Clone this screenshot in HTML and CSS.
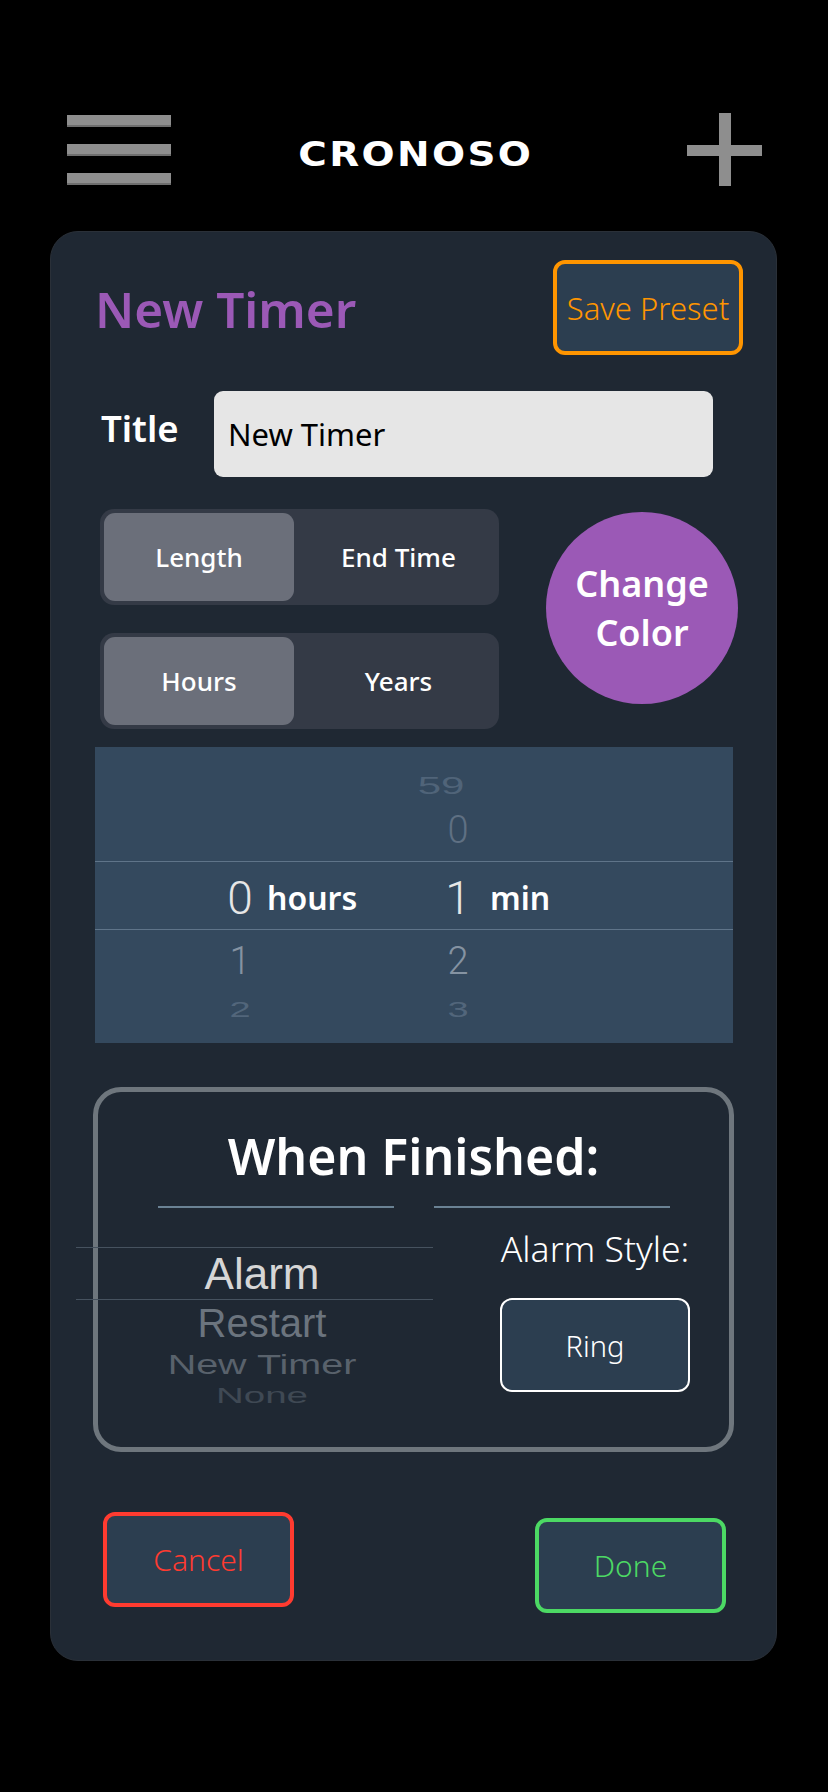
FILE: index.html
```html
<!DOCTYPE html>
<html lang="en">
<head>
<meta charset="utf-8">
<title>Cronoso - New Timer</title>
<link rel="stylesheet" href="styles.css">
</head>
<body>
<header class="topbar">
  <div class="menu"><span></span><span></span><span></span></div>
  <div class="logo">CRONOSO</div>
  <div class="add">
    <svg width="75" height="73" viewBox="0 0 75 73"><rect x="32" y="0" width="12" height="73" fill="#8e8e8e"/><rect x="0" y="32" width="75" height="11" fill="#8e8e8e"/></svg>
  </div>
</header>
<main class="card">
  <div class="head">
    <h1 class="title">New Timer</h1>
    <button class="btn btn-orange">Save Preset</button>
  </div>
  <div class="row-title">
    <div class="label">Title</div>
    <div class="input">New Timer</div>
  </div>
  <div class="row-options">
    <div class="segments">
      <div class="seg"><span class="on">Length</span><span>End Time</span></div>
      <div class="seg"><span class="on">Hours</span><span>Years</span></div>
    </div>
    <div class="color">Change<br>Color</div>
  </div>
  <div class="wheel">
    <div class="wrow r-far"><span></span><span class="d"></span><span></span><span class="d squash far-top">59</span><span></span></div>
    <div class="wrow r-near r-up"><span></span><span class="d"></span><span></span><span class="d">0</span><span></span></div>
    <div class="wrow r-sel"><span></span><span class="d">0</span><span class="u">hours</span><span class="d">1</span><span class="u u2">min</span></div>
    <div class="wrow r-near r-down"><span></span><span class="d">1</span><span></span><span class="d">2</span><span></span></div>
    <div class="wrow r-far r-bottom"><span></span><span class="d squash">2</span><span></span><span class="d squash">3</span><span></span></div>
  </div>
  <section class="finish">
    <h2 class="finish-title">When Finished:</h2>
    <div class="rules"><i></i><i></i></div>
    <div class="fbody">
      <div class="awheel">
        <div class="aw-sel">Alarm</div>
        <div class="aw aw1">Restart</div>
        <div class="aw aw2"><span>New Timer</span></div>
        <div class="aw aw3"><span>None</span></div>
      </div>
      <div class="alarm-style">
        <div class="as-label">Alarm Style:</div>
        <button class="btn btn-white">Ring</button>
      </div>
    </div>
  </section>
  <div class="actions">
    <button class="btn btn-red">Cancel</button>
    <button class="btn btn-green">Done</button>
  </div>
</main>
</body>
</html>
```
FILE: styles.css
```css
body {
  margin: 0;
  background: #000;
  width: 828px;
  min-height: 1792px;
  font-family: "Noto Sans", "DejaVu Sans", sans-serif;
}

.topbar {
  display: grid;
  grid-template-columns: 1fr auto 1fr;
  align-items: center;
  height: 73px;
  margin-top: 113px;
  padding: 0 66px 0 67px;
}
.menu {
  width: 104px;
  height: 70px;
  display: flex;
  flex-direction: column;
  justify-content: space-between;
}
.menu span {
  height: 12px;
  background: #8e8e8e;
  box-shadow: inset 0 -2px 0 #6e6e6e;
}
.logo {
  color: #fff;
  font-family: "DejaVu Sans", sans-serif;
  font-weight: 700;
  font-size: 33px;
  letter-spacing: 2px;
  padding-left: 2px;
  line-height: 1;
  margin-top: 10px;
  transform: scaleX(1.18);
}
.add {
  justify-self: end;
  width: 75px;
  height: 73px;
}
.add svg { display: block; }

.card {
  box-sizing: border-box;
  width: 727px;
  height: 1430px;
  margin: 45px 0 0 50px;
  padding: 28px 33px 0 44px;
  background: #1f2833;
  border: 1px solid #2a3038;
  border-radius: 28px;
}

.head {
  display: flex;
  justify-content: space-between;
  align-items: center;
  height: 95px;
}
.title {
  margin: 4px 0 0 0;
  font-size: 49.5px;
  font-weight: 600;
  line-height: 1;
  color: #9b59b6;
}

.btn {
  box-sizing: border-box;
  width: 190px;
  height: 95px;
  padding: 0;
  background: #2c3e50;
  border-radius: 12px;
  font-family: "Noto Sans", sans-serif;
  font-size: 30px;
  font-weight: 300;
  display: flex;
  align-items: center;
  justify-content: center;
}
.btn-orange { border: 4px solid #ff9500; color: #ff9500; font-size: 31px; }
.btn-white { border: 2px solid #fff; color: #fff; height: 94px; font-size: 29px; margin-top: 30px; }
.btn-red { border: 4px solid #ff3b30; color: #ff3b30; width: 191px; }
.btn-green { border: 4px solid #4cd964; color: #4cd964; width: 191px; margin-top: 6px; }

.row-title {
  display: flex;
  align-items: center;
  margin-top: 36px;
}
.label {
  width: 113px;
  margin-left: 6px;
  margin-bottom: 12px;
  font-size: 36.5px;
  font-weight: 600;
  color: #fff;
}
.input {
  box-sizing: border-box;
  width: 499px;
  height: 86px;
  padding-left: 14px;
  background: #e6e6e6;
  border-radius: 9px;
  display: flex;
  align-items: center;
  font-size: 31px;
  color: #000;
}

.row-options {
  display: flex;
  align-items: flex-start;
  margin-top: 32px;
}
.segments {
  margin-left: 5px;
  width: 399px;
  display: flex;
  flex-direction: column;
  gap: 28px;
}
.seg {
  box-sizing: border-box;
  display: flex;
  height: 96px;
  padding: 4px;
  background: #343a46;
  border-radius: 14px;
}
.seg span {
  flex: 1;
  display: flex;
  align-items: center;
  justify-content: center;
  padding-left: 8px;
  color: #fff;
  font-size: 26px;
  font-weight: 500;
  border-radius: 11px;
}
.seg .on {
  flex: 0 0 190px;
  padding-left: 0;
  background: #6b6f7a;
}
.color {
  margin: 3px 5px 0 auto;
  width: 192px;
  height: 192px;
  border-radius: 50%;
  background: #9b59b6;
  display: flex;
  align-items: center;
  justify-content: center;
  text-align: center;
  color: #fff;
  font-size: 36px;
  font-weight: 600;
  line-height: 49px;
}

.wheel {
  box-sizing: border-box;
  margin-top: 18px;
  width: 638px;
  height: 296px;
  padding-top: 18px;
  background: #34495e;
  font-family: Roboto, "Liberation Sans", sans-serif;
  font-weight: 300;
}
.wrow {
  display: grid;
  grid-template-columns: 125px 40px 178px 40px 1fr;
  align-items: center;
}
.wrow .d {
  text-align: center;
  line-height: 1;
  white-space: nowrap;
}
.r-far { height: 32px; }
.r-far:first-child { height: 34px; }
.r-far .d { font-size: 38px; color: #52667b; font-weight: 400; font-family: "Liberation Sans", sans-serif; }
.squash { display: block; transform: scaleY(0.6); }
.r-far .far-top {
  font-size: 42px;
  transform: scaleY(0.56);
  margin: 0 -30px;
  padding-right: 34px;
  color: #506479;
}
.r-near { height: 62px; }
.r-near .d { font-size: 38px; }
.r-up .d { color: #5f7083; }
.r-down .d { color: #8593a2; }
.r-bottom { margin-top: -2px; }
.r-sel {
  box-sizing: border-box;
  height: 69px;
  padding-top: 4px;
  align-items: center;
  border-top: 1px solid #5f7489;
  border-bottom: 1px solid #5f7489;
}
.r-sel .d { font-size: 46px; color: #e6e6e6; }
.r-sel .u {
  font-family: "Noto Sans", sans-serif;
  font-size: 32px;
  font-weight: 600;
  color: #fff;
  line-height: 1;
  padding-left: 7px;
}
.r-sel .u2 { padding-left: 12px; }

.finish {
  box-sizing: border-box;
  margin: 44px 0 0 -2px;
  width: 641px;
  height: 365px;
  padding-top: 34px;
  border: 5px solid #6e767d;
  border-radius: 28px;
}
.finish-title {
  margin: 0;
  text-align: center;
  font-size: 50px;
  font-weight: 600;
  line-height: 60px;
  color: #fff;
}
.rules {
  display: flex;
  justify-content: center;
  gap: 40px;
  margin-top: 20px;
}
.rules i {
  width: 236px;
  height: 2px;
  background: #6a8294;
}
.fbody {
  display: flex;
  align-items: flex-start;
  margin-top: 20px;
}
.awheel {
  margin-left: -22px;
  width: 357px;
  padding-top: 19px;
  font-family: "Liberation Sans", Arial, sans-serif;
}
.aw-sel, .aw {
  display: flex;
  align-items: center;
  justify-content: center;
  padding-left: 15px;
  line-height: 1;
  white-space: nowrap;
}
.aw-sel {
  box-sizing: border-box;
  height: 53px;
  border-top: 1px solid #46525f;
  border-bottom: 1px solid #46525f;
  font-size: 44px;
  color: #d6d6d6;
}
.aw1 { height: 46px; font-size: 40px; color: #6b747e; }
.aw2 { height: 38px; font-size: 39.5px; color: #59626c; }
.aw2 span { display: block; transform: scaleY(0.72); }
.aw3 { height: 25px; font-size: 38.5px; color: #3f4954; }
.aw3 span { display: block; transform: scaleY(0.55); }

.alarm-style {
  margin: 0 39px 0 auto;
  width: 190px;
  display: flex;
  flex-direction: column;
  align-items: center;
}
.as-label {
  font-size: 35.5px;
  line-height: 40px;
  font-weight: 300;
  color: #fff;
  white-space: nowrap;
}

.actions {
  display: flex;
  justify-content: space-between;
  align-items: flex-start;
  margin: 60px 17px 0 8px;
}
```
